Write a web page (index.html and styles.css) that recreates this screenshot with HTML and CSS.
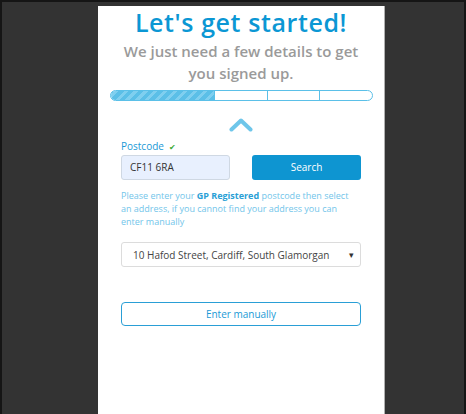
FILE: index.html
```html
<!DOCTYPE html>
<html>
<head>
<meta charset="utf-8">
<link rel="stylesheet" href="styles.css">
</head>
<body>
<div class="frame">
  <div class="panel">
    <h1 class="title">Let's get started!</h1>
    <p class="subtitle">We just need a few details to get<br>you signed up.</p>
    <div class="progress">
      <div class="seg fill"></div>
      <div class="seg"></div>
      <div class="seg"></div>
      <div class="seg"></div>
    </div>
    <div class="chevron">
      <svg width="24" height="15" viewBox="0 0 24 15"><polyline points="2.5,12.5 12,3.5 21.5,12.5" fill="none" stroke="#6ec6ea" stroke-width="4" stroke-linecap="round" stroke-linejoin="round"/></svg>
    </div>
    <div class="form">
      <div class="label">Postcode <span class="tick">✔</span></div>
      <div class="row">
        <div class="input">CF11 6RA</div>
        <div class="btn-search">Search</div>
      </div>
      <p class="help">Please enter your <b>GP Registered</b> postcode then select<br>an address, if you cannot find your address you can<br>enter manually</p>
      <div class="select"><span>10 Hafod Street, Cardiff, South Glamorgan</span><span class="arrow">▾</span></div>
      <div class="btn-manual">Enter manually</div>
    </div>
  </div>
</div>
</body>
</html>
```
FILE: styles.css
```css
html, body { margin: 0; padding: 0; }
body {
  background: #151515;
  width: 466px;
  height: 414px;
  overflow: hidden;
  font-family: "Open Sans", "Noto Sans", sans-serif;
}
.frame {
  margin: 2px 2px 0 2px;
  height: 412px;
  background: #333333;
  padding-top: 4px;
  box-sizing: border-box;
}
.panel {
  margin-left: 96px;
  width: 286px;
  height: 408px;
  background: #ffffff;
  border-right: 1px solid #b0b0b0;
  box-sizing: content-box;
}
.title {
  margin: 0;
  text-align: center;
  color: #0b97d4;
  font-size: 25px;
  font-weight: 600;
  letter-spacing: 0.6px;
  line-height: 30px;
  padding-top: 1px;
}
.subtitle {
  margin: 3px 0 0;
  text-align: center;
  color: #9a9a9a;
  font-size: 15px;
  font-weight: 600;
  line-height: 22px;
}
.progress {
  margin: 6px 0 0 12px;
  width: 263px;
  height: 11px;
  box-sizing: border-box;
  border: 1.5px solid #5bc0e8;
  border-radius: 6px;
  display: flex;
  overflow: hidden;
}
.seg {
  flex: 1 1 0;
  border-left: 1.5px solid #5bc0e8;
}
.seg:first-child { border-left: none; }
.seg.fill {
  flex: 2 1 0;
  background: repeating-linear-gradient(-45deg, #5bbfe7 0 4px, #7fcfef 4px 7px);
}
.chevron {
  display: flex;
  justify-content: center;
  margin-top: 16px;
  height: 15px;
}
.form {
  margin: 8px 23px 0 23px;
}
.label {
  color: #1a9ad6;
  font-size: 10px;
  line-height: 12px;
}
.tick { color: #3aaa35; font-size: 8px; margin-left: 2px; }
.row {
  display: flex;
  justify-content: space-between;
  margin-top: 2px;
}
.input {
  width: 109px;
  height: 25px;
  box-sizing: border-box;
  background: #e8f0fe;
  border: 1px solid #cfd8e3;
  border-radius: 3px;
  font-size: 10px;
  color: #333;
  line-height: 23px;
  padding-left: 8px;
}
.btn-search {
  width: 109px;
  height: 25px;
  background: #0e95d1;
  border-radius: 3px;
  color: #fff;
  font-size: 10px;
  line-height: 25px;
  text-align: center;
}
.help {
  margin: 9px 0 0;
  color: #72c5ea;
  font-size: 9px;
  line-height: 13px;
  white-space: nowrap;
}
.help b { color: #2a9fd6; font-weight: 700; }
.select {
  margin-top: 14px;
  height: 25px;
  box-sizing: border-box;
  border: 1px solid #dcdcdc;
  border-radius: 3px;
  display: flex;
  justify-content: space-between;
  align-items: center;
  padding: 0 6px 0 11px;
  font-size: 10px;
  color: #444;
}
.arrow { font-size: 9px; color: #333; }
.btn-manual {
  margin-top: 35px;
  height: 24px;
  box-sizing: border-box;
  border: 1px solid #2a9fd6;
  border-radius: 4px;
  color: #1a9ad6;
  font-size: 10px;
  line-height: 22px;
  text-align: center;
}
```
